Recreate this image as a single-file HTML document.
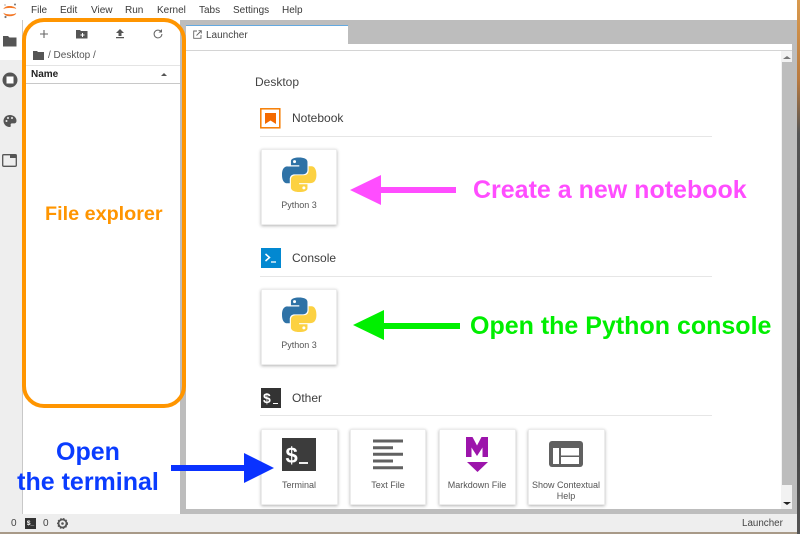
<!DOCTYPE html>
<html><head><meta charset="utf-8"><style>
html,body{margin:0;padding:0;width:800px;height:534px;overflow:hidden;background:#fff}
body{font-family:"Liberation Sans",sans-serif;position:relative;color:#444}
#w{position:absolute;left:0;top:0;width:800px;height:534px;filter:blur(.35px);background:#fff;overflow:hidden}
.a{position:absolute}
.t{position:absolute;white-space:nowrap}
.m{position:absolute;top:4px;font-size:10px;color:#3a3a3a;line-height:13px}
.card{position:absolute;width:76px;height:76px;background:#fff;border:1px solid #ececec;box-shadow:0 1px 3px rgba(0,0,0,.3);box-sizing:border-box;border-radius:1px}
.lab{position:absolute;font-size:9px;color:#555;text-align:center;width:80px;line-height:11px}
.h{position:absolute;font-size:12px;color:#3d3d3d;line-height:14px}
.hr{position:absolute;left:260px;width:452px;height:1px;background:#e6e6e6}
.b{position:absolute;font-weight:bold;white-space:nowrap}
</style></head><body><div id="w">
<svg width="0" height="0" style="position:absolute"><defs>
<g id="py"><path fill="#2f72a6" d="M17.6 0C8.6 0 9.200 3.900 9.200 3.900V8h8.600v1.200H5.700S0 8.600 0 17.700s5 8.800 5 8.800h3v-4.200s-.2-5 4.900-5h8.500s4.800.1 4.800-4.600V4.900S27 0 17.600 0zM12.900 2.700a1.500 1.500 0 1 1 0 3.100 1.500 1.500 0 0 1 0-3.100z"/><path fill="#fcd142" d="M17.800 35.500c9 0 8.400-3.900 8.400-3.900v-4.100h-8.600v-1.200h12.100s5.700.6 5.700-8.500-5-8.800-5-8.800h-3v4.200s.2 5-4.900 5h-8.500s-4.800-.1-4.800 4.600v7.800s-.7 4.900 8.600 4.900zm4.700-2.700a1.500 1.500 0 1 1 0-3.100 1.500 1.500 0 0 1 0 3.100z"/></g>
</defs></svg>

<!-- frame -->
<div class="a" style="left:0;top:0;width:800px;height:20px;background:#fff"></div>
<div class="a" style="left:0;top:20px;width:22px;height:494px;background:#eeeeee"></div>
<div class="a" style="left:0;top:20px;width:22px;height:40px;background:#fff"></div>
<div class="a" style="left:22px;top:20px;width:1px;height:494px;background:#c8c8c8"></div>
<div class="a" style="left:180px;top:20px;width:617px;height:494px;background:#bdbdbd"></div>
<div class="a" style="left:186px;top:44px;width:606px;height:6px;background:#fff"></div>
<div class="a" style="left:186px;top:50px;width:606px;height:1px;background:#d4d4d4"></div>
<div class="a" style="left:186px;top:51px;width:595px;height:458px;background:#fff"></div>
<div class="a" style="left:781px;top:51px;width:11px;height:458px;background:#f2f2f2"></div>
<div class="a" style="left:782px;top:62px;width:10px;height:423px;background:#bdbdbd"></div>
<div class="a" style="left:783px;top:56px;width:0;height:0;border:4px solid transparent;border-top:0;border-bottom:3px solid #777"></div>
<div class="a" style="left:783px;top:502px;width:0;height:0;border:4px solid transparent;border-bottom:0;border-top:3px solid #222"></div>
<div class="a" style="left:186px;top:25px;width:162px;height:20px;background:#fff;border-top:1px solid #64a9e0;box-sizing:border-box"></div>
<div class="a" style="left:0;top:514px;width:797px;height:20px;background:#eeeeee"></div>
<div class="a" style="left:0;top:532px;width:800px;height:2px;background:#a89a88"></div>
<div class="a" style="left:797px;top:0;width:3px;height:534px;background:linear-gradient(#d99a4e 0,#b97a40 15%,#555 25%,#3c3c3c 70%,#555 100%)"></div>

<!-- logo -->
<svg class="a" style="left:2px;top:2px" width="16" height="17" viewBox="0 0 16 17"><path d="M2 6.500C4 3.500 11 3.500 14 6.500C11 5.200 5 5.200 2 6.500z" fill="#f37726" stroke="#f37726" stroke-width=".6"/><path d="M2 11.500C4 14.800 11 14.800 14 11.500C11 13 5 13 2 11.500z" fill="#f37726" stroke="#f37726" stroke-width=".6"/><circle cx="13" cy="2.500" r="1" fill="#777"/><circle cx="3.500" cy="15" r="1.100" fill="#777"/><circle cx="3" cy="3" r=".6" fill="#777"/></svg>

<div class="m" style="left:31px">File</div>
<div class="m" style="left:60px">Edit</div>
<div class="m" style="left:91px">View</div>
<div class="m" style="left:125px">Run</div>
<div class="m" style="left:157px">Kernel</div>
<div class="m" style="left:199px">Tabs</div>
<div class="m" style="left:233px">Settings</div>
<div class="m" style="left:282px">Help</div>

<!-- sidebar icons -->
<svg class="a" style="left:3px;top:35px" width="14" height="12" viewBox="0 0 14 12"><path fill="#555" d="M0 1h5l1.500 1.500H13.500V11.500H0z"/></svg>
<svg class="a" style="left:2px;top:72px" width="16" height="16" viewBox="0 0 16 16"><circle cx="8" cy="8" r="7.500" fill="#555"/><rect x="4.500" y="4.500" width="7" height="7" fill="#fff"/></svg>
<svg class="a" style="left:3px;top:114px" width="14" height="14" viewBox="0 0 14 14"><path fill="#555" d="M7 1C3 1 .5 3.800.5 7s2.800 6 6 6c1.200 0 1.500-.8 1.200-1.600-.4-1 .2-2 1.300-2h2c1.500 0 2.500-1 2.500-2.700C13.500 3.500 10.500 1 7 1z"/><circle cx="3.500" cy="7" r="1" fill="#eee"/><circle cx="5" cy="4" r="1" fill="#eee"/><circle cx="9" cy="4" r="1" fill="#eee"/></svg>
<svg class="a" style="left:2px;top:154px" width="15" height="13" viewBox="0 0 15 13"><rect x=".7" y=".7" width="13.600" height="11.600" rx="1" fill="none" stroke="#555" stroke-width="1.300"/><rect x="8" y="1" width="6" height="3" fill="#555"/></svg>

<!-- file toolbar -->
<svg class="a" style="left:39px;top:29px" width="10" height="10" viewBox="0 0 10 10"><path d="M5 1v8M1 5h8" stroke="#666" stroke-width="1.100"/></svg>
<svg class="a" style="left:76px;top:29px" width="12" height="10" viewBox="0 0 12 10"><path fill="#555" d="M0 1h4l1 1h6.500v7.500H0z"/><path d="M6.500 4v4M4.500 6h4" stroke="#fff" stroke-width="1"/></svg>
<svg class="a" style="left:115px;top:29px" width="10" height="10" viewBox="0 0 10 10"><path fill="#555" d="M5 0l4 4H6.500v3h-3V4H1zM1 8h8v1.300H1z"/></svg>
<svg class="a" style="left:153px;top:29px" width="10" height="10" viewBox="0 0 10 10"><path d="M8 2.500A3.900 3.900 0 1 0 8.900 5" fill="none" stroke="#666" stroke-width="1"/><path fill="#666" d="M9 0v3.500H5.500z"/></svg>
<svg class="a" style="left:33px;top:51px" width="11" height="9" viewBox="0 0 11 9"><path fill="#555" d="M0 0h4l1 1h6v8H0z"/></svg>
<div class="t" style="left:48px;top:49px;font-size:10px;line-height:13px;color:#555">/ Desktop /</div>
<div class="a" style="left:23px;top:65px;width:157px;height:1px;background:#e4e4e4"></div>
<div class="t" style="left:31px;top:68px;font-size:10px;font-weight:bold;line-height:13px;color:#222">Name</div>
<div class="a" style="left:161px;top:73px;width:0;height:0;border:3px solid transparent;border-top:0;border-bottom:3px solid #555"></div>
<div class="a" style="left:23px;top:83px;width:157px;height:1px;background:#c8c8c8"></div>

<!-- tab -->
<svg class="a" style="left:193px;top:30px" width="9" height="9" viewBox="0 0 9 9"><path d="M4 1H.7v7.300H8V5M3.500 5.500L8 1M5.500 .7h2.800v2.800" fill="none" stroke="#666" stroke-width=".9"/></svg>
<div class="t" style="left:206px;top:29px;font-size:10px;line-height:13px;color:#444">Launcher</div>

<!-- launcher -->
<div class="t" style="left:255px;top:75px;font-size:12px;line-height:14px;color:#444">Desktop</div>

<svg class="a" style="left:260px;top:108px" width="21" height="21" viewBox="0 0 21 21"><rect x=".8" y=".8" width="19" height="19" fill="none" stroke="#f57c00" stroke-width="1.500"/><path fill="#f46a00" d="M5 5h11v11l-5.500-3.500L5 16z"/></svg>
<div class="h" style="left:292px;top:111px">Notebook</div>
<div class="hr" style="top:136px"></div>
<div class="card" style="left:261px;top:149px"></div>
<svg class="a" style="left:282px;top:157px" width="35" height="36" viewBox="0 0 36 36"><use href="#py"/></svg>
<div class="lab" style="left:259px;top:200px">Python 3</div>

<svg class="a" style="left:261px;top:248px" width="20" height="20" viewBox="0 0 20 20"><rect width="20" height="20" fill="#0288d1"/><path d="M4.500 6l4 3.500-4 3.500" fill="none" stroke="#fff" stroke-width="1.500"/><path d="M10 14h5" stroke="#fff" stroke-width="1.300"/></svg>
<div class="h" style="left:292px;top:251px">Console</div>
<div class="hr" style="top:276px"></div>
<div class="card" style="left:261px;top:289px"></div>
<svg class="a" style="left:282px;top:297px" width="35" height="36" viewBox="0 0 36 36"><use href="#py"/></svg>
<div class="lab" style="left:259px;top:340px">Python 3</div>

<div class="a" style="left:261px;top:388px;width:20px;height:20px;background:#333;overflow:hidden">
  <span class="t" style="left:2px;top:2px;color:#fff;font-size:14px;font-weight:bold;line-height:16px">$</span>
  <div class="a" style="left:12px;top:14.500px;width:5px;height:1.300px;background:#fff"></div>
</div>
<div class="h" style="left:292px;top:391px">Other</div>
<div class="hr" style="top:415px"></div>

<div class="card" style="left:261px;top:429px;height:76px;width:77px"></div>
<div class="a" style="left:282px;top:438px;width:34px;height:33px;background:#3c3c3c"></div>
<span class="t" style="left:285.500px;top:445px;color:#fff;font-size:22px;font-weight:bold;line-height:22px">$</span>
<div class="a" style="left:299px;top:462px;width:8.500px;height:2px;background:#eee"></div>
<div class="lab" style="left:259px;top:480px">Terminal</div>

<div class="card" style="left:350px;top:429px;height:76px;width:76px"></div>
<svg class="a" style="left:373px;top:439px" width="30" height="31" viewBox="0 0 30 31"><path d="M0 2h30M0 8.700h20M0 15.300h30M0 22h20M0 28.700h30" stroke="#616161" stroke-width="3"/></svg>
<div class="lab" style="left:348px;top:480px">Text File</div>

<div class="card" style="left:439px;top:429px;height:76px;width:77px"></div>
<svg class="a" style="left:465px;top:436px" width="24" height="37" viewBox="0 0 24 37"><path fill="#9c14ab" d="M1 1h6.500L12 9.500 16.500 1H23v20h-5.500V11.500L12 20 6.500 11.500V21H1z"/><path fill="#9c14ab" d="M2 26h21L12.500 36z"/></svg>
<div class="lab" style="left:437px;top:480px">Markdown File</div>

<div class="card" style="left:528px;top:429px;height:76px;width:77px"></div>
<svg class="a" style="left:549px;top:441px" width="34" height="26" viewBox="0 0 34 26"><rect width="34" height="26" rx="3" fill="#616161"/><rect x="4" y="7" width="6" height="16" fill="#fff"/><rect x="12" y="7" width="18" height="7.500" fill="#fff"/><rect x="12" y="16" width="18" height="7" fill="#fff"/></svg>
<div class="lab" style="left:526px;top:480px">Show Contextual<br>Help</div>

<!-- status bar -->
<div class="t" style="left:11px;top:517px;font-size:10px;line-height:13px;color:#444">0</div>
<div class="a" style="left:25px;top:518px;width:11px;height:11px;background:#333;color:#fff;font-size:6.500px;font-weight:bold;line-height:11px;text-align:center;overflow:hidden">$_</div>
<div class="t" style="left:43px;top:517px;font-size:10px;line-height:13px;color:#444">0</div>
<svg class="a" style="left:57px;top:518px" width="11" height="11" viewBox="0 0 11 11"><circle cx="5.500" cy="5.500" r="4" fill="none" stroke="#555" stroke-width="1.800"/><circle cx="5.500" cy="5.500" r="5" fill="none" stroke="#555" stroke-width="1" stroke-dasharray="1.500 1.500"/><circle cx="5.500" cy="5.500" r="1.300" fill="#555"/></svg>
<div class="t" style="left:742px;top:517px;font-size:9.800px;line-height:13px;color:#444">Launcher</div>

<!-- annotations -->
<div class="a" style="left:22px;top:18px;width:164px;height:390px;border:4px solid #ff9500;border-radius:22px;box-sizing:border-box"></div>
<div class="b" style="left:45px;top:203px;font-size:19.800px;line-height:22px;color:#ff9500">File explorer</div>

<svg class="a" style="left:345px;top:170px" width="115" height="40" viewBox="0 0 115 40"><path fill="#ff4dff" d="M5 20L36 5v12h75v6H36v12z"/></svg>
<div class="b" style="left:473px;top:176px;font-size:25px;line-height:28px;color:#ff4dff">Create a new notebook</div>

<svg class="a" style="left:349px;top:305px" width="115" height="40" viewBox="0 0 115 40"><path fill="#00f000" d="M4 20L35 5v13h76v6H35v11z"/></svg>
<div class="b" style="left:470px;top:312px;font-size:25px;line-height:28px;color:#00ee00">Open the Python console</div>

<div class="b" style="left:0;top:437px;width:176px;text-align:center;font-size:25px;line-height:30px;color:#0a3cff">Open<br>the terminal</div>
<svg class="a" style="left:170px;top:450px" width="120" height="36" viewBox="0 0 120 36"><path fill="#0a32ff" d="M1 15h73V3l30 15-30 15V21H1z"/></svg>
</div></body></html>
